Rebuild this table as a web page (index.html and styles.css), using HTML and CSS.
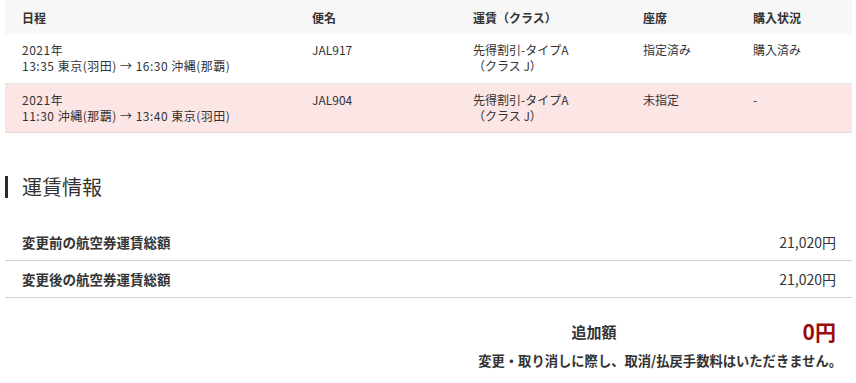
FILE: index.html
```html
<!DOCTYPE html>
<html lang="ja">
<head>
<meta charset="utf-8">
<link rel="stylesheet" href="styles.css">
</head>
<body>
<div class="page">
  <div class="flights">
    <div class="row head">
      <div class="cell">日程</div>
      <div class="cell">便名</div>
      <div class="cell">運賃（クラス）</div>
      <div class="cell">座席</div>
      <div class="cell">購入状況</div>
    </div>
    <div class="row item">
      <div class="cell sched">2021年<br>13:35 東京(羽田) → 16:30 沖縄(那覇)</div>
      <div class="cell">JAL917</div>
      <div class="cell">先得割引-タイプA<br>（クラス J）</div>
      <div class="cell">指定済み</div>
      <div class="cell">購入済み</div>
    </div>
    <div class="row item changed">
      <div class="cell sched">2021年<br>11:30 沖縄(那覇) → 13:40 東京(羽田)</div>
      <div class="cell">JAL904</div>
      <div class="cell">先得割引-タイプA<br>（クラス J）</div>
      <div class="cell">未指定</div>
      <div class="cell">-</div>
    </div>
  </div>

  <h2 class="section-title">運賃情報</h2>

  <div class="fares">
    <div class="fare-row">
      <span class="fare-label">変更前の航空券運賃総額</span>
      <span class="fare-value">21,020円</span>
    </div>
    <div class="fare-row">
      <span class="fare-label">変更後の航空券運賃総額</span>
      <span class="fare-value">21,020円</span>
    </div>
  </div>

  <div class="total">
    <div class="total-line">
      <span class="total-label">追加額</span>
      <span class="total-value">0円</span>
    </div>
    <p class="note">変更・取り消しに際し、取消/払戻手数料はいただきません。</p>
  </div>
</div>
</body>
</html>
```

FILE: styles.css
```css
* { box-sizing: border-box; }
body {
  margin: 0;
  background: #fff;
  color: #333;
  font-family: "Noto Sans CJK JP", "Noto Sans", sans-serif;
  font-size: 12px;
}
.page {
  padding: 0 4px 0 5px;
}
.row {
  display: grid;
  grid-template-columns: 290px 161px 170px 110px 1fr;
}
.cell {
  padding-left: 17px;
}
.sched {
  letter-spacing: 0.5px;
}
.head {
  background: #f7f7f7;
  height: 34px;
  align-items: center;
  font-weight: bold;
}
.item {
  line-height: 16px;
  padding: 8px 0 8px;
  height: 50px;
  border-bottom: 1px dotted #d9c9c9;
}
.item.changed {
  background: #fbe5e5;
  height: 49px;
  border-bottom: 1px solid #e4dada;
}
.section-title {
  margin: 43px 0 0;
  border-left: 3px solid #262a3a;
  padding-left: 14px;
  font-size: 20px;
  font-weight: normal;
  line-height: 22px;
  color: #333;
}
.fares {
  margin-top: 26px;
}
.fare-row {
  display: flex;
  justify-content: space-between;
  align-items: center;
  height: 37px;
  padding: 0 16px 0 17px;
  border-bottom: 1px solid #d4d4d4;
}
.fare-label {
  font-weight: bold;
  font-size: 13.5px;
}
.fare-value {
  font-size: 14px;
}
.total {
  padding: 20px 16px 0 0;
  text-align: right;
}
.total-line {
  display: flex;
  justify-content: flex-end;
  align-items: center;
}
.total-label {
  font-size: 15px;
  font-weight: bold;
  margin-right: 186px;
}
.total-value {
  font-size: 21px;
  font-weight: bold;
  color: #9a0b0b;
  line-height: 26px;
}
.note {
  margin: 7px -6px 0 0;
  font-size: 13.3px;
  font-weight: bold;
}
```
